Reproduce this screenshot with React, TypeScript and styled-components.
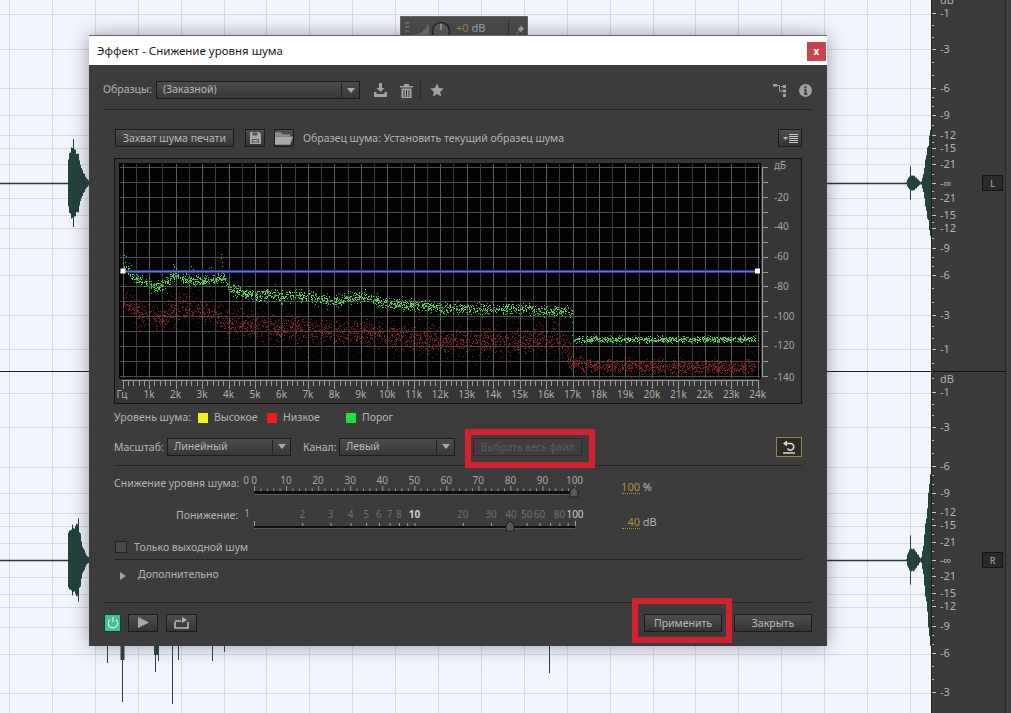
import React, { useMemo } from "react";
import styled, { createGlobalStyle } from "styled-components";

const Global = createGlobalStyle`
  html, body { margin: 0; padding: 0; background: #f3f5fd; }
  #root { width: 1011px; height: 713px; }
  * { box-sizing: border-box; }
`;

const FONT = `"Noto Sans", "Liberation Sans", sans-serif`;

const rng = (seed: number) => {
  let s = seed;
  return () => {
    s = (s * 1664525 + 1013904223) % 4294967296;
    return s / 4294967296;
  };
};
const gauss = (r: () => number) => (r() + r() + r() + r() - 2) / 1.0;
const interp = (pts: number[][], x: number) => {
  for (let i = 1; i < pts.length; i++) {
    if (x <= pts[i][0]) {
      const [a, b] = pts[i - 1];
      const [c, d] = pts[i];
      return b + ((d - b) * (x - a)) / (c - a || 1);
    }
  }
  return pts[pts.length - 1][1];
};

const kx = (k: number) => 122.7 + k * 26.46;

const GREEN = [[0,266],[0.15,268],[0.3,274],[0.6,279],[1,284],[1.3,287],[1.7,281],[1.9,274],[2.1,276],[2.3,279],[3,280],[3.5,279],[3.85,278],[4,288],[4.5,292],[5,295],[5.5,293],[6,297],[6.5,295],[7,295],[7.5,299],[8,301],[8.5,298],[9,296],[9.5,299],[10,303],[11,305],[11.5,306],[12,308],[13,308],[14,309],[15,308],[16,311],[16.98,310],[17,339],[24,339]];
const RED = [[0,297],[0.2,304],[0.5,312],[1,316],[1.5,320],[1.8,310],[2.5,306],[3.2,312],[4,322],[5,325],[6,328],[7,330],[8,332],[9,332],[10,336],[11,339],[12,342],[13,341],[14,341],[15,342],[16,338],[16.7,344],[17,362],[17.5,366],[24,367]];

const dots = (seed: number, pts: number[][], count: number, spread: number) => {
  const r = rng(seed);
  let d = "";
  for (let i = 0; i < count; i++) {
    const k = r() * 23.9;
    const y = interp(pts, k) + gauss(r) * spread * (k > 17 ? 0.5 : 1);
    d += `M${kx(k).toFixed(0)} ${y.toFixed(0)}h1v1h-1z`;
  }
  return d;
};

const GREEN_SPIKES = [[0.05,255],[0.1,262],[0.12,256],[0.3,265],[1.9,264],[1.95,266],[2,268],[2.6,266],[2.65,269],[3.35,267],[3.7,254],[3.72,258],[3.74,262],[3.76,266],[3.78,270]];

const waveBlob = (seed: number, cy: number, env: number[][], scale: number) => {
  const r = rng(seed);
  let d = "";
  const x0 = env[0][0];
  const x1 = env[env.length - 1][0];
  for (let x = x0; x <= x1; x += 1) {
    const h = interp(env, x) * (0.82 + r() * 0.18) * scale;
    d += `M${x + 0.5} ${(cy - h).toFixed(1)}V${(cy + h).toFixed(1)}`;
  }
  return d;
};

const LEFT_ENV_TOP = [[67,0],[68,26],[70,34],[73,45],[75,34],[78,30],[80,22],[82,14],[85,7],[88,3],[90,1]];
const LEFT_ENV_BOT = [[67,0],[68,30],[72,36],[75,38],[78,45],[79,32],[82,16],[85,7],[88,3],[90,1]];
const RIGHT_ENV = [[906,1],[907,6],[909,12],[910,30],[911,12],[914,12],[917,7],[920,2],[921,3],[923,16],[925,38],[927,60],[929,80],[930,90],[931,90]];

const TOP_LINES = [14,49,88,115,135,148,164,198,215,228,248,275,315,349];
const BOTTOM_LINES = [393,427,467,493,513,526,543,577,594,607,627,654,693];
const GRID_X = Array.from({ length: 22 }, (_, i) => 9 + i * 42.9);

const Page = styled.div`
  position: relative;
  width: 1011px;
  height: 713px;
  overflow: hidden;
  display: flex;
  background: #f3f5fd;
  font-family: ${FONT};
`;
const WaveArea = styled.div`
  width: 931px;
  height: 713px;
  flex: none;
`;
const RulerPanel = styled.div`
  position: relative;
  width: 75px;
  height: 713px;
  flex: none;
  background: #3b3b3b;
  border-left: 1px solid #222;
  border-right: 1px solid #2a2a2a;
`;
const EdgeStrip = styled.div`
  flex: 1;
  background: #3f3f3f;
`;
const ChannelTag = styled.div<{ $top: number }>`
  position: absolute;
  left: 50px;
  top: ${(p) => p.$top}px;
  width: 21px;
  height: 16px;
  display: flex;
  align-items: center;
  justify-content: center;
  background: #2a2a2a;
  border: 1px solid #151515;
  color: #b5b5b5;
  font-size: 9px;
`;

const FloatBar = styled.div`
  position: absolute;
  left: 400px;
  top: 16px;
  width: 128px;
  height: 26px;
  background: #4b4b4b;
  border: 1px solid #666;
  display: flex;
  align-items: flex-start;
  padding: 3px 0 0 4px;
  font-size: 11px;
  color: #aaa;
`;
const GainPlus = styled.span`
  color: #a8862f;
  margin-left: 5px;
  line-height: 16px;
`;
const GainUnit = styled.span`
  margin-left: 3px;
  line-height: 16px;
`;
const BarSep = styled.span`
  width: 1px;
  height: 16px;
  background: #333;
  margin: 0 7px 0 22px;
`;

const Dialog = styled.div`
  position: absolute;
  left: 89px;
  top: 35px;
  width: 738px;
  height: 611px;
  display: flex;
  flex-direction: column;
  background: #3c3c3c;
  box-shadow: 0 0 18px rgba(40, 40, 70, 0.45);
  color: #b4b4b4;
  font-size: 10.5px;
`;
const TitleBar = styled.div`
  height: 30px;
  flex: none;
  background: #fff;
  border-top: 1px solid #666;
  display: flex;
  align-items: center;
  justify-content: space-between;
  padding: 0 1px 0 8px;
  color: #1a1a1a;
  font-size: 11.5px;
`;
const CloseBtn = styled.div`
  width: 19px;
  height: 19px;
  margin-top: 1px;
  background: #c7434e;
  color: #fff;
  font-weight: 700;
  font-size: 10px;
  display: flex;
  align-items: center;
  justify-content: center;
`;
const Body = styled.div`
  flex: 1;
  display: flex;
  flex-direction: column;
  padding: 0 15px;
  position: relative;
`;
const PresetRow = styled.div`
  height: 45px;
  flex: none;
  display: flex;
  align-items: center;
  border-bottom: 1px solid #252525;
  padding-top: 6px;
`;
const PresetLabel = styled.span`
  margin: 0 5px 0 -1px;
  padding-bottom: 3px;
  width: 48px;
  flex: none;
`;
const Select = styled.div<{ $w: number }>`
  width: ${(p) => p.$w}px;
  height: 18px;
  flex: none;
  border: 1px solid #1c1c1c;
  background: linear-gradient(#4c4c4c, #383838);
  display: flex;
  align-items: center;
  padding: 0 0 2px 6px;
  position: relative;
  color: #b9b9b9;
`;
const SelectArrow = styled.span`
  position: absolute;
  right: 0;
  top: 1px;
  bottom: 1px;
  width: 18px;
  border-left: 1px solid #222;
  display: flex;
  align-items: center;
  justify-content: center;
  &::after {
    content: "";
    border-left: 4px solid transparent;
    border-right: 4px solid transparent;
    border-top: 5px solid #aaa;
  }
`;
const IconSlot = styled.span<{ $ml: number }>`
  display: flex;
  flex: none;
  margin-left: ${(p) => p.$ml}px;
`;
const VSep = styled.span`
  width: 1px;
  height: 18px;
  background: #2a2a2a;
  margin-left: 7px;
  flex: none;
`;
const Spacer = styled.span`
  flex: 1;
`;
const CaptureRow = styled.div`
  margin: 19px 10px 0 11px;
  height: 18px;
  flex: none;
  display: flex;
  align-items: center;
`;
const Button = styled.div<{ $w: number; $disabled?: boolean }>`
  width: ${(p) => p.$w}px;
  height: 18px;
  flex: none;
  border: 1px solid ${(p) => (p.$disabled ? "#2c2c2c" : "#1c1c1c")};
  background: ${(p) => (p.$disabled ? "#3f3f3f" : "linear-gradient(#4e4e4e, #343434)")};
  color: ${(p) => (p.$disabled ? "#5e5e5e" : "#b9b9b9")};
  font-size: ${(p) => (p.$disabled ? "10px" : "inherit")};
  display: flex;
  align-items: center;
  justify-content: center;
  position: relative;
`;
const SampleText = styled.span`
  margin-left: 9px;
  white-space: nowrap;
`;
const ChartPanel = styled.div`
  margin: 11px 10px 0 10px;
  height: 246px;
  flex: none;
  border: 1px solid #111;
  background: #363636;
  display: flex;
`;
const LegendRow = styled.div`
  height: 26px;
  flex: none;
  margin-left: 10px;
  display: flex;
  align-items: center;
`;
const LegendLabel = styled.span<{ $w: number }>`
  width: ${(p) => p.$w}px;
  flex: none;
  white-space: nowrap;
`;
const Swatch = styled.span<{ $c: string }>`
  width: 10px;
  height: 10px;
  flex: none;
  background: ${(p) => p.$c};
  margin: 1px 6px 0 0;
`;
const ScaleRow = styled.div`
  height: 36px;
  flex: none;
  margin: 0 10px;
  display: flex;
  align-items: center;
  border-bottom: 1px solid #252525;
  padding-bottom: 2px;
`;
const ScaleLabel = styled.span<{ $ml: number }>`
  margin-left: ${(p) => p.$ml}px;
  width: ${(p) => (p.$ml ? 36 : 53)}px;
  flex: none;
  white-space: nowrap;
`;
const Marked = styled.div<{ $t: number; $r: number; $b: number; $l: number }>`
  position: relative;
  flex: none;
  display: flex;
  &::after {
    content: "";
    position: absolute;
    top: ${(p) => -p.$t}px;
    right: ${(p) => -p.$r}px;
    bottom: ${(p) => -p.$b}px;
    left: ${(p) => -p.$l}px;
    border: 6px solid #d3212f;
    pointer-events: none;
  }
`;
const ResetBtn = styled.div`
  width: 26px;
  height: 20px;
  flex: none;
  border: 1px solid #9c8549;
  background: #2f2c26;
  display: flex;
  align-items: center;
  justify-content: center;
`;
const SliderRow = styled.div`
  height: 35px;
  flex: none;
  margin-left: 10px;
  display: flex;
  align-items: flex-start;
`;
const SliderLabel = styled.div<{ $pt: number }>`
  width: 124px;
  flex: none;
  text-align: right;
  padding-top: ${(p) => p.$pt}px;
  line-height: 16px;
  white-space: nowrap;
`;
const SliderValue = styled.div`
  margin-left: 32px;
  padding-top: 13px;
  width: 70px;
  display: flex;
  justify-content: flex-start;
  line-height: 15px;
  font-size: 11px;
`;
const ValueNum = styled.span`
  width: 18px;
  flex: none;
  display: flex;
  justify-content: flex-end;
  color: #b08c39;
  border-bottom: 1px dotted #b08c39;
  height: 15px;
`;
const OnlyRow = styled.div`
  height: 24px;
  flex: none;
  margin: 0 10px;
  display: flex;
  align-items: center;
  border-bottom: 1px solid #252525;
  padding: 0 0 2px 1px;
`;
const Check = styled.span`
  width: 12px;
  height: 12px;
  flex: none;
  border: 1px solid #222;
  background: #494949;
  margin-right: 7px;
`;
const MoreRow = styled.div`
  height: 43px;
  flex: none;
  display: flex;
  align-items: flex-start;
  padding: 7px 0 0 16px;
  border-bottom: 1px solid #252525;
  margin-top: 0;
`;
const MoreArrow = styled.span`
  border-top: 4px solid transparent;
  border-bottom: 4px solid transparent;
  border-left: 6px solid #a0a0a0;
  margin: 5px 12px 0 0;
`;
const Footer = styled.div`
  flex: 1;
  display: flex;
  align-items: center;
  padding-bottom: 4px;
`;
const PowerBtn = styled.div`
  width: 17px;
  height: 18px;
  flex: none;
  background: #45c094;
  border: 1px solid #1c3a30;
  display: flex;
  align-items: center;
  justify-content: center;
`;
const FootIcon = styled(Button)<{ $ml: number }>`
  margin-left: ${(p) => p.$ml}px;
`;
const ApplyGap = styled.span`
  width: 12px;
  flex: none;
`;

const SLIDE_Y = [0, 10, 20, 30, 40, 50, 60, 70, 80, 90, 100];
const logX = (v: number) => 254 + 160.5 * Math.log10(v);
const LOG_LABELS = [2, 3, 4, 5, 6, 7, 8, 10, 20, 30, 40, 50, 60, 80, 100];
const LOG_TICKS = [1, 2, 3, 4, 5, 6, 7, 8, 9, 10, 20, 30, 40, 50, 60, 70, 80, 90, 100];

const Thumb = ({ x, y }: { x: number; y: number }) => (
  <path d={`M${x - 4} ${y + 4}V${y - 2}L${x} ${y - 6}L${x + 4} ${y - 2}V${y + 4}Z`} fill="#595959" stroke="#1c1c1c" />
);

const SliderA = () => (
  <svg width="350" height="35" viewBox="240 466 350 35" fontFamily={FONT} fontSize="10">
    <text x="246" y="484" fill="#a5a5a5" textAnchor="middle">0</text>
    {SLIDE_Y.map((v) => (
      <text key={v} x={254 + v * 3.205} y="484" fill="#a5a5a5" textAnchor="middle">{v}</text>
    ))}
    {Array.from({ length: 51 }, (_, i) => (
      <line key={i} x1={254.5 + i * 6.41} x2={254.5 + i * 6.41} y1={i % 5 === 0 ? 486 : 488.5} y2="491" stroke="#9a9a9a" />
    ))}
    <rect x="254" y="491" width="321" height="3" fill="#0f0f0f" />
    <rect x="254" y="494" width="321" height="1" fill="#5a5a5a" />
    <Thumb x={574} y={493} />
  </svg>
);
const SliderB = () => (
  <svg width="350" height="35" viewBox="240 501 350 35" fontFamily={FONT} fontSize="10">
    <text x="247" y="517" fill="#a5a5a5" textAnchor="middle">1</text>
    {LOG_LABELS.map((v) => (
      <text key={v} x={logX(v)} y="518" fill={v === 10 || v === 100 ? "#cfcfcf" : "#707070"} fontWeight={v === 10 ? 700 : 400} textAnchor="middle">{v}</text>
    ))}
    {LOG_TICKS.map((v) => (
      <line key={v} x1={logX(v) + 0.5} x2={logX(v) + 0.5} y1={v === 1 || v === 100 ? 521 : 523} y2="526" stroke="#a0a0a0" />
    ))}
    <rect x="254" y="526" width="321" height="2" fill="#0f0f0f" />
    <rect x="254" y="528" width="321" height="1" fill="#5a5a5a" />
    <Thumb x={510} y={527} />
  </svg>
);

const HLINES = Array.from({ length: 15 }, (_, i) => 167 + i * 14.93);
const DB_LABELS: [number, string][] = [[197, "-20"], [226, "-40"], [256, "-60"], [286, "-80"], [316, "-100"], [345, "-120"], [377, "-140"]];

const Spectrum = () => {
  const { green, greenHi, red, redDim, spikes } = useMemo(
    () => ({
      green: dots(7, GREEN, 2300, 4.6),
      greenHi: dots(21, GREEN, 500, 7),
      red: dots(13, RED, 3200, 11),
      redDim: dots(31, RED, 600, 24),
      spikes: GREEN_SPIKES.map(([k, y]) => `M${kx(k).toFixed(0)} ${y}h1v1h-1z`).join(""),
    }),
    []
  );
  return (
    <svg width="686" height="244" viewBox="115 159 686 244" fontFamily={FONT} fontSize="10">
      <rect x="119" y="163" width="642" height="216" fill="#030303" />
      {HLINES.map((y) => (
        <line key={y} x1="120" x2="760" y1={Math.round(y) + 0.5} y2={Math.round(y) + 0.5} stroke="#4c4c4c" />
      ))}
      {Array.from({ length: 49 }, (_, i) => {
        const x = Math.round(kx(i / 2)) + 0.5;
        return <line key={i} x1={x} x2={x} y1="164" y2="378" stroke={i % 2 === 0 ? "#5a5a5a" : "#3c3c3c"} />;
      })}
      <path d={redDim} fill="#561717" shapeRendering="crispEdges" />
      <path d={red} fill="#7c2424" shapeRendering="crispEdges" />
      <path d={greenHi} fill="#3f9a3f" shapeRendering="crispEdges" />
      <path d={green} fill="#4fcf4f" shapeRendering="crispEdges" />
      <path d={spikes} fill="#58c858" shapeRendering="crispEdges" />
      <rect x="123" y="270" width="634" height="3" fill="#33409a" />
      <rect x="123" y="271" width="634" height="1" fill="#5f72e0" />
      <rect x="120.5" y="268.5" width="5" height="5" fill="#fff" />
      <rect x="755" y="268.5" width="5" height="5" fill="#fff" />
      {Array.from({ length: 121 }, (_, i) => {
        const x = Math.round(kx(i / 5)) + 0.5;
        return <line key={i} x1={x} x2={x} y1="380" y2={i % 5 === 0 ? 389 : 386} stroke="#9a9a9a" />;
      })}
      <line x1="122" x2="758" y1="380.5" y2="380.5" stroke="#9a9a9a" />
      <text x="122" y="398" fill="#b0b0b0" textAnchor="middle">Гц</text>
      {Array.from({ length: 24 }, (_, i) => (
        <text key={i} x={kx(i + 1)} y="398" fill="#b0b0b0" textAnchor="middle">{i + 1}k</text>
      ))}
      <line x1="762.5" x2="762.5" y1="167" y2="377" stroke="#9a9a9a" />
      {Array.from({ length: 15 }, (_, i) => {
        const y = Math.round(167 + i * 14.93) + 0.5;
        return <line key={i} x1="762" x2="768" y1={y} y2={y} stroke="#9a9a9a" />;
      })}
      <text x="774" y="169" fill="#a5a5a5">дБ</text>
      {DB_LABELS.map(([y, t]) => (
        <text key={t} x="774" y={y + 3.5} fill="#a5a5a5">{t}</text>
      ))}
    </svg>
  );
};

const Waves = () => {
  const d = useMemo(
    () =>
      waveBlob(101, 183, LEFT_ENV_TOP, 1) +
      waveBlob(201, 183, RIGHT_ENV, 0.63) +
      waveBlob(102, 560, LEFT_ENV_BOT, 1) +
      waveBlob(202, 560, RIGHT_ENV, 1),
    []
  );
  const spikes = [[107,663],[122,702],[155,672],[158,661],[172,704],[178,660],[212,661],[224,652],[549,673]];
  return (
    <svg width="931" height="713" viewBox="0 0 931 713" style={{ display: "block" }}>
      {GRID_X.map((x) => (
        <line key={x} x1={Math.round(x) + 0.5} x2={Math.round(x) + 0.5} y1="0" y2="713" stroke="#d3dde0" />
      ))}
      {[...TOP_LINES, ...BOTTOM_LINES].map((y) => (
        <line key={y} x1="0" x2="931" y1={y + 0.5} y2={y + 0.5} stroke="#d3dde0" />
      ))}
      <line x1="0" x2="931" y1="183.5" y2="183.5" stroke="#2a3a36" strokeWidth="1.4" />
      <line x1="0" x2="931" y1="560.5" y2="560.5" stroke="#2a3a36" strokeWidth="1.4" />
      <line x1="0" x2="931" y1="371.5" y2="371.5" stroke="#222" />
      <path d={d} stroke="#23423a" strokeWidth="1" fill="none" />
      {spikes.map(([x, y]) => (
        <line key={x} x1={x + 0.5} x2={x + 0.5} y1="640" y2={y} stroke="#2a4640" />
      ))}
      <rect x="120.500" y="640" width="4" height="20" fill="#2a4640" />
      <rect x="154" y="640" width="4" height="15" fill="#2a4640" />
    </svg>
  );
};

const T1 = [[13,"-1"],[49,"-3"],[88,"-6"],[115,"-9"],[135,"-12"],[148,"-15"],[164,"-21"],[183,"-∞"],[198,"-21"],[215,"-15"],[228,"-12"],[248,"-9"],[275,"-6"],[315,"-3"],[349,"-1"]] as [number, string][];
const T2 = [[392,"-1"],[427,"-3"],[466,"-6"],[493,"-9"],[512,"-12"],[525,"-15"],[542,"-21"],[560,"-∞"],[576,"-21"],[593,"-15"],[606,"-12"],[626,"-9"],[653,"-6"],[692,"-3"]] as [number, string][];

const Ruler = () => {
  const minor = useMemo(() => {
    const out: number[] = [];
    const all = [...T1, ...T2].map((t) => t[0]);
    for (let i = 1; i < all.length; i++) {
      const gap = all[i] - all[i - 1];
      if (gap > 20 && gap < 50) {
        out.push(all[i - 1] + gap / 3, all[i - 1] + (2 * gap) / 3);
      } else if (gap <= 20) {
        out.push(all[i - 1] + gap / 2);
      }
    }
    return out;
  }, []);
  return (
    <svg width="74" height="713" viewBox="932 0 74 713" fontFamily={FONT} fontSize="11" style={{ display: "block" }}>
      <text x="940" y="4" fill="#b0b0b0">dB</text>
      <text x="940" y="383" fill="#b0b0b0">dB</text>
      <line x1="932" x2="1006" y1="371.5" y2="371.5" stroke="#111" />
      {minor.map((y, i) => (
        <line key={i} x1="932" x2="934" y1={Math.round(y) + 0.5} y2={Math.round(y) + 0.5} stroke="#c0c0c0" />
      ))}
      {[...T1, ...T2].map(([y, t], i) => (
        <g key={i}>
          <line x1="932" x2="936" y1={y + 0.5} y2={y + 0.5} stroke="#c8c8c8" />
          <text x="940" y={y + 4} fill="#b4b4b4">{t}</text>
        </g>
      ))}
    </svg>
  );
};

const IC = "#a2a2a2";
const DownloadIcon = () => (
  <svg width="15" height="15" viewBox="0 0 15 15"><path d="M6 0h3v5h2.500L7.500 9 3.500 5H6z" fill={IC} /><path d="M1 9h2l1 2h7l1-2h2v5H1z" fill={IC} /></svg>
);
const TrashIcon = () => (
  <svg width="13" height="15" viewBox="0 0 13 15"><path d="M0 3h13v1.500H0zM4 1h5v2H4z" fill={IC} /><path d="M1.500 5.500h10V15h-10z" fill={IC} /><path d="M4 7v7M6.500 7v7M9 7v7" stroke="#3c3c3c" /></svg>
);
const StarIcon = () => (
  <svg width="14" height="14" viewBox="0 0 14 14"><path d="M7 0.500l2 4.500 4.800.5-3.600 3.200 1 4.800L7 11l-4.200 2.500 1-4.800L0.200 5.500 5 5z" fill={IC} /></svg>
);
const TreeIcon = () => (
  <svg width="13" height="13" viewBox="0 0 13 13"><path d="M0 0h4v2.500H0zM10 1h3v3h-3zM10 5.500h3v3h-3zM10 10h3v3h-3z" fill={IC} /><path d="M4 1.500h2.500V7H10M8 2.500H10" stroke={IC} fill="none" /></svg>
);
const InfoIcon = () => (
  <svg width="13" height="13" viewBox="0 0 13 13"><circle cx="6.500" cy="6.500" r="6.500" fill={IC} /><path d="M5.500 2.200h2v2h-2zM4.800 5.300h2.700v4.200h1v1.300H4.800V9.500h1V6.600h-1z" fill="#333" /></svg>
);
const SaveIcon = () => (
  <svg width="11" height="12" viewBox="0 0 11 12"><path d="M0 0h9l2 2v10H0z" fill="#a8a8a8" /><path d="M2.500 0.500h5v3h-5zM2 7h7v4H2z" fill="#555" /><path d="M3 8.500h5M3 10h5" stroke="#aaa" /></svg>
);
const FolderIcon = () => (
  <svg width="19" height="13" viewBox="0 0 19 13"><path d="M0 2V0h6l2 2h8v2H0z" fill="#8c8c8c" /><path d="M0 13V4.500h19L16 13z" fill="#a8a8a8" /></svg>
);
const MenuIcon = () => (
  <svg width="15" height="9" viewBox="0 0 15 9"><path d="M0 3h5L2.500 6z" fill="#c0c0c0" /><path d="M6 .5h9M6 2.500h9M6 4.500h9M6 6.500h9M6 8.500h9" stroke="#c8c8c8" /></svg>
);
const ResetIcon = () => (
  <svg width="14" height="14" viewBox="0 0 14 14"><path d="M4 3.500h4.500a3.300 3.300 0 1 1-3 4.800" stroke="#d8d8d8" strokeWidth="1.500" fill="none" /><path d="M5 .5L1 3.500l4 3z" fill="#d8d8d8" /><path d="M1 13h12" stroke="#d8d8d8" strokeWidth="1.500" /></svg>
);
const PowerIcon = () => (
  <svg width="12" height="13" viewBox="0 0 12 13"><path d="M3.200 3.500a4.700 4.700 0 1 0 5.600 0M6 1v5" stroke="#c9f3e0" strokeWidth="1.200" fill="none" /></svg>
);
const PlayIcon = () => (
  <svg width="11" height="11" viewBox="0 0 11 11"><path d="M0 0l11 5.500L0 11z" fill="#a8a8a8" /></svg>
);
const LoopIcon = () => (
  <svg width="15" height="12" viewBox="0 0 15 12"><path d="M1 5v6h13V5M1 4h6" stroke="#b8b8b8" strokeWidth="1.600" fill="none" /><path d="M8 0l5 3-5 3z" fill="#b8b8b8" /></svg>
);
const SignalIcon = () => (
  <svg width="46" height="20" viewBox="0 0 46 20" style={{ flex: "none" }}>
    <path d="M1 2v2M1 6v2M1 10v2M3 2v2M3 6v2M3 10v2" stroke="#888" />
    <path d="M9 15h1M11 14.500v1M13 14v2M15 13v3M17 12v4M19 10v6M21 8v8M23 5v11" stroke="#999" />
    <circle cx="36" cy="11" r="8.500" fill="#5a5a5a" stroke="#222" strokeWidth="1.500" />
    <path d="M36 4v6" stroke="#ccc" />
  </svg>
);
const PinIcon = () => (
  <svg width="8" height="10" viewBox="0 0 8 10" style={{ marginTop: 6 }}><path d="M5 0l3 3-1.500.5L5 6 2 3l2.500-1.500zM3 5L0 9" fill="#aaa" stroke="#aaa" strokeWidth="0.600" /></svg>
);

export default function App() {
  return (
    <Page>
      <Global />
      <WaveArea><Waves /></WaveArea>
      <RulerPanel>
        <Ruler />
        <ChannelTag $top={175}>L</ChannelTag>
        <ChannelTag $top={552}>R</ChannelTag>
      </RulerPanel>
      <EdgeStrip />
      <FloatBar>
        <SignalIcon />
        <GainPlus>+0</GainPlus>
        <GainUnit>dB</GainUnit>
        <BarSep />
        <PinIcon />
      </FloatBar>
      <Dialog>
        <TitleBar>
          <span>Эффект - Снижение уровня шума</span>
          <CloseBtn>x</CloseBtn>
        </TitleBar>
        <Body>
          <PresetRow>
            <PresetLabel>Образцы:</PresetLabel>
            <Select $w={204}>(Заказной)<SelectArrow /></Select>
            <IconSlot $ml={13}><DownloadIcon /></IconSlot>
            <IconSlot $ml={12}><TrashIcon /></IconSlot>
            <VSep />
            <IconSlot $ml={9}><StarIcon /></IconSlot>
            <Spacer />
            <IconSlot $ml={0}><TreeIcon /></IconSlot>
            <IconSlot $ml={13}><InfoIcon /></IconSlot>
          </PresetRow>
          <CaptureRow>
            <Button $w={119}>Захват шума печати</Button>
            <FootIcon $w={20} $ml={11}><SaveIcon /></FootIcon>
            <FootIcon $w={20} $ml={9}><FolderIcon /></FootIcon>
            <SampleText>Образец шума: Установить текущий образец шума</SampleText>
            <Spacer />
            <Button $w={24}><MenuIcon /></Button>
          </CaptureRow>
          <ChartPanel><Spectrum /></ChartPanel>
          <LegendRow>
            <LegendLabel $w={84}>Уровень шума:</LegendLabel>
            <Swatch $c="#f4ee1e" />
            <LegendLabel $w={53}>Высокое</LegendLabel>
            <Swatch $c="#ee1c1c" />
            <LegendLabel $w={63}>Низкое</LegendLabel>
            <Swatch $c="#1fe03f" />
            <span>Порог</span>
          </LegendRow>
          <ScaleRow>
            <ScaleLabel $ml={0}>Масштаб:</ScaleLabel>
            <Select $w={124}>Линейный<SelectArrow /></Select>
            <ScaleLabel $ml={12}>Канал:</ScaleLabel>
            <Select $w={116}>Левый<SelectArrow /></Select>
            <IconSlot $ml={18}>
              <Marked $t={9} $r={13} $b={12} $l={8}>
                <Button $w={109} $disabled>Выбрать весь файл</Button>
              </Marked>
            </IconSlot>
            <Spacer />
            <ResetBtn><ResetIcon /></ResetBtn>
          </ScaleRow>
          <SliderRow>
            <SliderLabel $pt={9}>Снижение уровня шума:</SliderLabel>
            <IconSlot $ml={2}><SliderA /></IconSlot>
            <SliderValue><ValueNum>100</ValueNum>&nbsp;%</SliderValue>
          </SliderRow>
          <SliderRow>
            <SliderLabel $pt={6}>Понижение:</SliderLabel>
            <IconSlot $ml={2}><SliderB /></IconSlot>
            <SliderValue><ValueNum>40</ValueNum>&nbsp;dB</SliderValue>
          </SliderRow>
          <OnlyRow>
            <Check />
            <span>Только выходной шум</span>
          </OnlyRow>
          <MoreRow>
            <MoreArrow />
            <span>Дополнительно</span>
          </MoreRow>
          <Footer>
            <PowerBtn><PowerIcon /></PowerBtn>
            <FootIcon $w={30} $ml={7}><PlayIcon /></FootIcon>
            <FootIcon $w={31} $ml={8}><LoopIcon /></FootIcon>
            <Spacer />
            <Marked $t={16} $r={10} $b={11} $l={12}>
              <Button $w={78}>Применить</Button>
            </Marked>
            <ApplyGap />
            <Button $w={78}>Закрыть</Button>
          </Footer>
        </Body>
      </Dialog>
    </Page>
  );
}
